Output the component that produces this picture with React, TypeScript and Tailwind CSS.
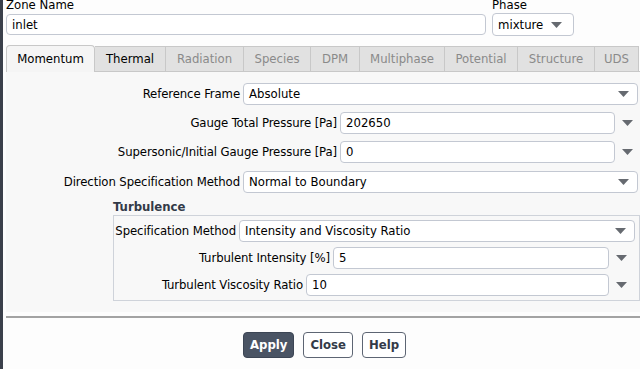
const font = { fontFamily: 'Tahoma, "DejaVu Sans Condensed", "Liberation Sans", sans-serif' };

const tabs = [
  { label: 'Momentum', state: 'active', w: 'w-[89px]' },
  { label: 'Thermal', state: 'on', w: 'w-[71px]' },
  { label: 'Radiation', state: 'off', w: 'w-[78px]' },
  { label: 'Species', state: 'off', w: 'w-[67px]' },
  { label: 'DPM', state: 'off', w: 'w-[49px]' },
  { label: 'Multiphase', state: 'off', w: 'w-[85px]' },
  { label: 'Potential', state: 'off', w: 'w-[73px]' },
  { label: 'Structure', state: 'off', w: 'w-[77px]' },
  { label: 'UDS', state: 'off', w: 'w-[44px]' },
];

function Caret() {
  return (
    <svg width="11" height="6" viewBox="0 0 11 6" className="shrink-0">
      <path d="M0 0 H11 L5.5 6 Z" fill="#666a70" />
    </svg>
  );
}

function Select({ value, className }: { value: string; className: string }) {
  return (
    <div className={`h-[22px] flex items-center justify-between pl-[5px] pr-[8px] bg-white border border-[#c3c8d2] rounded-[4px] text-[13px] text-black ${className}`}>
      <span>{value}</span>
      <Caret />
    </div>
  );
}

function NumberField({ value, className }: { value: string; className: string }) {
  return (
    <div className={`flex items-center ${className}`}>
      <div className="h-[22px] flex-1 flex items-center pl-[5px] bg-white border border-[#c3c8d2] rounded-[4px] text-[13px] text-black">
        {value}
      </div>
      <div className="w-[24px] flex justify-center">
        <Caret />
      </div>
    </div>
  );
}

function Row({ label, labelW, children, mt }: { label: string; labelW: string; children: React.ReactNode; mt: string }) {
  return (
    <div className={`flex items-center ${mt}`}>
      <div className={`${labelW} text-right pr-[3px] text-[13px] text-black shrink-0 whitespace-nowrap tracking-[-0.1px]`}>{label}</div>
      {children}
    </div>
  );
}

export default function App() {
  return (
    <div className="w-[640px] h-[369px] bg-[#fdfdfd] flex overflow-hidden" style={font}>
      <div className="w-[3px] bg-[#3b404b] shrink-0" />
      <div className="flex-1 pl-[3px] flex flex-col">
        {/* zone + phase */}
        <div className="flex h-[40px]">
          <div className="w-[480px]">
            <div className="text-[13px] leading-[13px] -mt-[2px] text-black">Zone Name</div>
            <div className="mt-[3px] h-[21px] flex items-center pl-[5px] bg-white border border-[#c3c8d2] rounded-[4px] text-[13px] text-black">
              inlet
            </div>
          </div>
          <div className="ml-[6px]">
            <div className="text-[13px] leading-[13px] -mt-[2px] text-black">Phase</div>
            <div className="mt-[2px] w-[82px] h-[23px] flex items-center justify-between pl-[5px] pr-[11px] bg-white border border-[#c3c8d2] rounded-[4px] text-[13px] text-black">
              <span>mixture</span>
              <Caret />
            </div>
          </div>
        </div>

        {/* tabs */}
        <div className="flex h-[26px] mt-[6px] items-end border-b border-[#c8c8c8]">
          {tabs.map((t) => (
            <div
              key={t.label}
              className={`${t.w} shrink-0 flex items-center justify-center text-[13px] border-t border-r border-[#c8c8c8] ${
                t.state === 'active'
                  ? 'h-[27px] bg-[#f5f5f5] border-l rounded-t-[4px] text-black -mb-px'
                  : t.state === 'on'
                  ? 'h-[25px] bg-[#e1e1e1] text-black'
                  : 'h-[25px] bg-[#e1e1e1] text-[#8a8a8a]'
              }`}
            >
              {t.label}
            </div>
          ))}
        </div>

        {/* panel */}
        <div className="bg-[#f8f8f8] h-[240px] pt-[11px] flex flex-col">
          <Row label="Reference Frame" labelW="w-[237px]" mt="mt-0">
            <Select value="Absolute" className="w-[395px]" />
          </Row>
          <Row label="Gauge Total Pressure [Pa]" labelW="w-[334px]" mt="mt-[7px]">
            <NumberField value="202650" className="w-[299px]" />
          </Row>
          <Row label="Supersonic/Initial Gauge Pressure [Pa]" labelW="w-[334px]" mt="mt-[7px]">
            <NumberField value="0" className="w-[299px]" />
          </Row>
          <Row label="Direction Specification Method" labelW="w-[237px]" mt="mt-[8px]">
            <Select value="Normal to Boundary" className="w-[395px]" />
          </Row>

          <div className="ml-[107px] mt-[6px]">
            <div className="text-[13px] font-bold text-[#333a48] leading-[16px]">Turbulence</div>
            <div className="border border-[#cfd3da] h-[86px] pt-[4px]">
              <Row label="Specification Method" labelW="w-[125px]" mt="mt-0">
                <Select value="Intensity and Viscosity Ratio" className="w-[396px]" />
              </Row>
              <Row label="Turbulent Intensity [%]" labelW="w-[219px]" mt="mt-[5px]">
                <NumberField value="5" className="w-[300px]" />
              </Row>
              <Row label="Turbulent Viscosity Ratio" labelW="w-[192px]" mt="mt-[5px]">
                <NumberField value="10" className="w-[327px]" />
              </Row>
            </div>
          </div>
        </div>

        <div className="h-[2px] bg-[#a3a3a3] mt-[4px]" />

        {/* buttons */}
        <div className="flex justify-center gap-[9px] mt-[14px] pl-[3px]">
          <div className="h-[26px] px-[6px] flex items-center rounded-[4px] bg-[#4a5464] border border-[#3c4554] text-white font-bold text-[13px]">
            Apply
          </div>
          <div className="h-[26px] px-[6px] flex items-center rounded-[4px] bg-white border border-[#5d6573] text-[#333a48] font-bold text-[13px]">
            Close
          </div>
          <div className="h-[26px] px-[6px] flex items-center rounded-[4px] bg-white border border-[#5d6573] text-[#333a48] font-bold text-[13px]">
            Help
          </div>
        </div>
      </div>
    </div>
  );
}
